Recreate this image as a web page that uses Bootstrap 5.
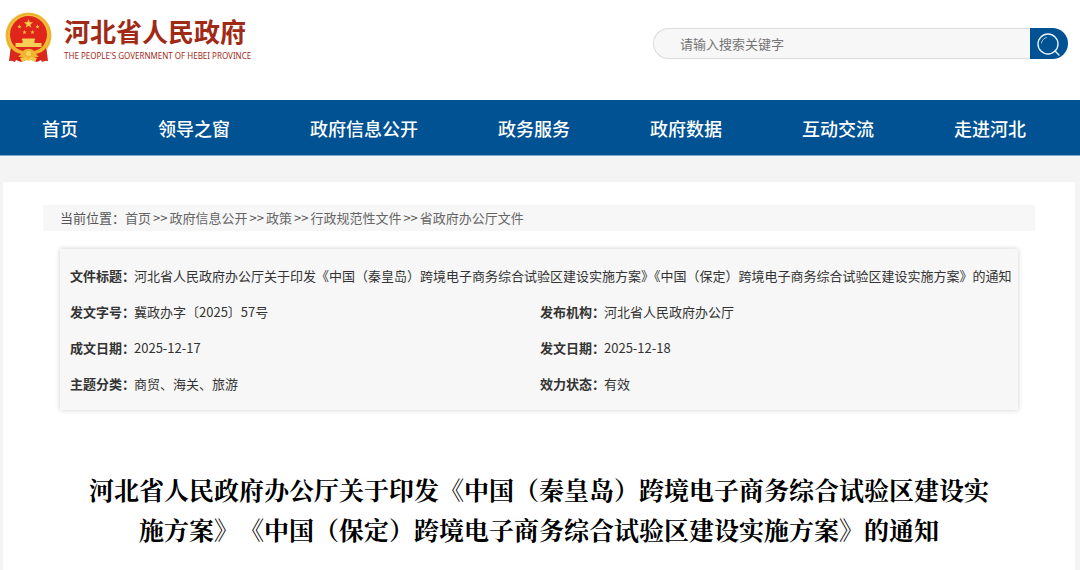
<!DOCTYPE html>
<html lang="zh-CN">
<head>
<meta charset="utf-8">
<meta name="viewport" content="width=device-width, initial-scale=1">
<title>河北省人民政府</title>
<link href="https://cdn.jsdelivr.net/npm/bootstrap@5.3.0/dist/css/bootstrap.min.css" rel="stylesheet">
<style>
body{background:#f4f4f4;color:#333;font-family:"Noto Sans CJK SC",sans-serif;font-size:13px;line-height:26px}
a{color:inherit;text-decoration:none}
a:hover{text-decoration:underline}
.site-head{min-height:100px;padding:12px 12px 0 5px}
.brand{color:#9f2b17;gap:12px}
.brand-cn{font-size:26px;line-height:38px;font-weight:700}
.brand-en{font-family:"Noto Sans",sans-serif;font-size:8px;line-height:12px;font-weight:400;white-space:nowrap}
.search{width:415px;max-width:50%;margin-top:16px}
.search .form-control{height:31px;border:1px solid #dcdcdc;border-right:0;border-radius:16px 0 0 16px;background:#f7f7f7;font-size:13px;padding:0 12px 0 26px}
.search .form-control::placeholder{color:#757575}
.search .btn{width:38px;height:31px;border-radius:0 16px 16px 0;background:#005293}
.main-nav{background:#005293;border-bottom:1px solid #7fa8c9;padding:0 54px 0 42px;min-height:56px}
.main-nav a{color:#fff;font-size:18px;font-weight:500;white-space:nowrap}
.sheet{margin:26px 5px 0 3px;padding:23px 40px 40px}
.crumbs{background:#f7f7f7;padding:0 17px;color:#555;gap:2px}
.crumbs a{color:#666}
.info{background:#f7f7f7;margin:18px 17px 0;padding:9px 9px 8px;box-shadow:0 0 5px rgba(0,0,0,.2)}
.info table{table-layout:fixed}
.info th,.info td{height:36px;vertical-align:middle}
.info th{white-space:nowrap;font-weight:700}
@media (min-width:1060px){.info td{white-space:nowrap}}
.col-label{width:64px}
.doc-title{margin:59px 40px 0;color:#000;font-family:"Noto Serif CJK SC","Noto Serif SC","Source Han Serif SC","Noto Sans CJK SC",serif;font-size:25px;line-height:40px;font-weight:700;text-spacing-trim:space-all}
</style>
</head>
<body>
<header class="site-head bg-white d-flex justify-content-between align-items-start">
  <a class="brand d-flex align-items-start" href="#">
    <svg width="47" height="51" viewBox="0 0 47 51" aria-hidden="true">
      <path d="M6 34h35l2 15-7-1-4 2-8-3-8 3-5-2-7 1z" fill="#d5201a"/>
      <circle cx="23.500" cy="23.500" r="23" fill="#f2bd38"/>
      <circle cx="23.500" cy="23.500" r="21.500" fill="none" stroke="#e5aa2f" stroke-width="1"/>
      <circle cx="23.500" cy="22.500" r="18.500" fill="#e0251b"/>
      <path d="M23.500 7l1.200 3.200 3.400.1-2.700 2.100 1 3.300-2.900-1.900-2.900 1.900 1-3.300-2.700-2.100 3.400-.1z" fill="#f8cd45"/>
      <g fill="#f5c33f">
        <path id="st" d="M14.500 12.500l.6 1.400 1.500.1-1.200 1 .4 1.500-1.300-.8-1.300.8.4-1.500-1.200-1 1.500-.1z"/>
        <use href="#st" x="18"/><use href="#st" x="5" y="5.500"/><use href="#st" x="13" y="5.500"/>
      </g>
      <path d="M17.500 26.500h12l1 1.500h-1v3h7v4h-26v-4h7v-3h-1z" fill="#f7cf55"/>
      <path d="M5 33c4 1 8 5 13 6 3-3 8-3 11 0 5-1 9-5 13-6l-2 9-7 3-4-1-3 3h-5l-3-3-4 1-7-3z" fill="#efb52f"/>
      <circle cx="23.500" cy="41.500" r="2.500" fill="#f8d561"/>
      <path d="M6 36c3 4 7 5 10 6l-4 4-2 4-5-2zM41 36c-3 4-7 5-10 6l4 4 2 4 5-2z" fill="#dc271d"/>
      <path d="M15 46l6-1 2.500 2 2.500-2 6 1-2 4-4-2-2.500 1-2.500-1-4 2z" fill="#f6c944"/>
    </svg>
    <span class="d-flex flex-column">
      <span class="brand-cn">河北省人民政府</span>
      <span class="brand-en">THE PEOPLE'S GOVERNMENT OF HEBEI PROVINCE</span>
    </span>
  </a>
  <form class="search d-flex" role="search">
    <input class="form-control shadow-none" type="search" placeholder="请输入搜索关键字" aria-label="请输入搜索关键字">
    <button class="btn p-0 border-0 flex-shrink-0 d-flex align-items-center justify-content-center" type="button" aria-label="搜索">
      <svg width="24" height="24" viewBox="0 0 24 24" fill="none" stroke="#e6f2fb" stroke-width="1.400" stroke-linecap="round"><circle cx="11" cy="12" r="10"/><path d="M18 19l4 4"/><path d="M4.500 11c.5-3 2.500-5 5-5.500" stroke-width="1" opacity=".7"/></svg>
    </button>
  </form>
</header>
<nav class="main-nav d-flex justify-content-between align-items-center" aria-label="主导航">
  <a href="#">首页</a><a href="#">领导之窗</a><a href="#">政府信息公开</a><a href="#">政务服务</a><a href="#">政府数据</a><a href="#">互动交流</a><a href="#">走进河北</a>
</nav>
<main class="sheet bg-white">
  <div class="crumbs d-flex flex-wrap">
    <span>当前位置：<a href="#">首页</a></span><span>&gt;&gt;</span><a href="#">政府信息公开</a><span>&gt;&gt;</span><a href="#">政策</a><span>&gt;&gt;</span><a href="#">行政规范性文件</a><span>&gt;&gt;</span><a href="#">省政府办公厅文件</a>
  </div>
  <section class="info">
    <table class="w-100">
      <colgroup><col class="col-label"><col><col class="col-label"><col></colgroup>
      <tbody>
      <tr><th scope="row">文件标题：</th><td colspan="3">河北省人民政府办公厅关于印发《中国（秦皇岛）跨境电子商务综合试验区建设实施方案》《中国（保定）跨境电子商务综合试验区建设实施方案》的通知</td></tr>
      <tr><th scope="row">发文字号：</th><td>冀政办字〔2025〕57号</td><th scope="row">发布机构：</th><td>河北省人民政府办公厅</td></tr>
      <tr><th scope="row">成文日期：</th><td>2025-12-17</td><th scope="row">发文日期：</th><td>2025-12-18</td></tr>
      <tr><th scope="row">主题分类：</th><td>商贸、海关、旅游</td><th scope="row">效力状态：</th><td>有效</td></tr>
      </tbody>
    </table>
  </section>
  <h1 class="doc-title text-center">河北省人民政府办公厅关于印发《中国（秦皇岛）跨境电子商务综合试验区建设实施方案》《中国（保定）跨境电子商务综合试验区建设实施方案》的通知</h1>
</main>
<script src="https://cdn.jsdelivr.net/npm/bootstrap@5.3.0/dist/js/bootstrap.bundle.min.js"></script>
</body>
</html>
